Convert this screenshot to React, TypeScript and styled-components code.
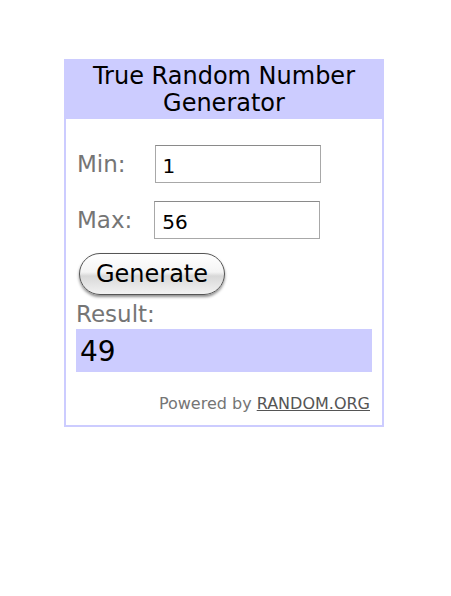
import styled, { createGlobalStyle } from "styled-components";

const GlobalStyle = createGlobalStyle`
    body {
        margin: 0;
        background: #ffffff;
        font-family: "DejaVu Sans", Verdana, sans-serif;
    }
`;

const Page = styled.div`
    padding: 59px 0 0 64px;
`;

const Widget = styled.div`
    width: 316px;
    height: 366px;
    border: 2px solid #ccccff;
    border-top: 0;
    background: #ffffff;
    display: flex;
    flex-direction: column;
`;

const Header = styled.div`
    background: #ccccff;
    margin: 0 -2px;
    height: 60px;
    display: flex;
    align-items: center;
    justify-content: center;
    text-align: center;
    font-size: 24px;
    line-height: 27px;
    color: #000;
    padding-top: 2px;
    box-sizing: border-box;
`;

const Body = styled.div`
    padding: 26px 10px 0 10px;
    display: flex;
    flex-direction: column;
`;

const Row = styled.div<{ $gap: number }>`
    display: flex;
    align-items: center;
    gap: ${(p) => p.$gap}px;
    padding-left: 1px;
    margin-bottom: 18px;
`;

const Label = styled.span`
    font-size: 23px;
    color: #757575;
`;

const Input = styled.input`
    width: 166px;
    height: 38px;
    box-sizing: border-box;
    border: 1px solid #a8a8a8;
    border-top-color: #8a8a8a;
    font-family: "DejaVu Sans", Verdana, sans-serif;
    font-size: 20px;
    padding: 4px 7px 0;
    color: #000;
    outline: none;
`;

const Button = styled.button`
    align-self: flex-start;
    margin: -4px 0 0 3px;
    width: 146px;
    height: 42px;
    border-radius: 21px;
    border: 1px solid #555;
    background: linear-gradient(#ffffff 0%, #f4f4f4 45%, #d8d8d8 55%, #f2f2f2 100%);
    box-shadow: 0 2px 3px rgba(0, 0, 0, 0.45);
    font-family: "DejaVu Sans", Verdana, sans-serif;
    font-size: 24px;
    color: #000;
    cursor: pointer;
`;

const ResultLabel = styled.div`
    margin-top: 6px;
    font-size: 23px;
    line-height: 26px;
    color: #757575;
`;

const ResultBox = styled.div`
    margin-top: 2px;
    width: 296px;
    height: 43px;
    background: #ccccff;
    font-size: 28px;
    line-height: 45px;
    padding-left: 4px;
    box-sizing: border-box;
    color: #000;
`;

const Footer = styled.div`
    margin-top: 22px;
    padding-right: 2px;
    text-align: right;
    font-size: 16px;
    color: #757575;

    a {
        color: #555;
        text-decoration: underline;
    }
`;

export default function App() {
    return (
        <>
            <GlobalStyle />
            <Page>
                <Widget>
                    <Header>
                        True Random Number
                        <br />
                        Generator
                    </Header>
                    <Body>
                        <Row $gap={29}>
                            <Label>Min:</Label>
                            <Input defaultValue="1" />
                        </Row>
                        <Row $gap={22}>
                            <Label>Max:</Label>
                            <Input defaultValue="56" />
                        </Row>
                        <Button>Generate</Button>
                        <ResultLabel>Result:</ResultLabel>
                        <ResultBox>49</ResultBox>
                        <Footer>
                            Powered by <a href="#">RANDOM.ORG</a>
                        </Footer>
                    </Body>
                </Widget>
            </Page>
        </>
    );
}
